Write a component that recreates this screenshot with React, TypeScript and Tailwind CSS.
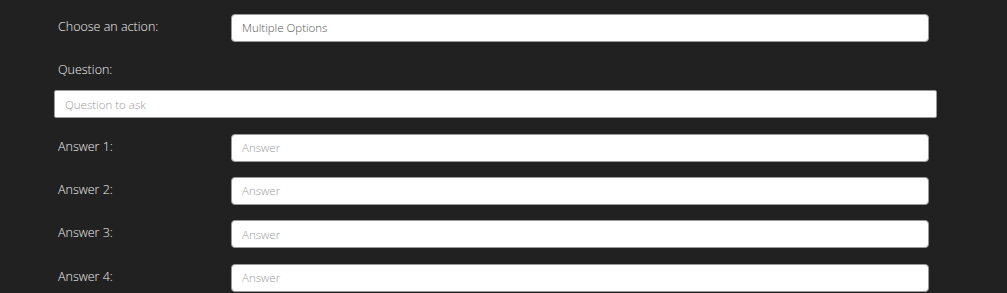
import React from 'react';

const answers = [1, 2, 3, 4];

const Row: React.FC<{ label: string; children: React.ReactNode }> = ({ label, children }) => (
  <div className="flex items-center h-[28px] pl-[4px]">
    <div className="w-[173px] shrink-0 text-[12.5px] font-light text-[#f0f0f0] -mt-[1px]">{label}</div>
    {children}
  </div>
);

const inputCls =
  'w-[698px] h-[28px] bg-white border border-[#9a9a9a] rounded-[4px] px-[10px] text-[11.5px] font-light text-[#555] placeholder:text-[#9b9b9b] outline-none';

export default function App() {
  return (
    <div
      className="w-full h-[293px] bg-[#212121] overflow-hidden pl-[54px] pt-[14px]"
      style={{ fontFamily: '"Open Sans", "Liberation Sans", sans-serif' }}
    >
      <div className="w-[883px]">
        <Row label="Choose an action:">
          <div className={inputCls + ' flex items-center'}>Multiple Options</div>
        </Row>
        <div className="mt-[18px] h-[20px] flex items-center pl-[4px] text-[12.5px] font-light text-[#f0f0f0]">Question:</div>
        <input
          className="block mt-[10px] w-[883px] h-[28px] bg-white border border-[#9a9a9a] rounded-[2px] px-[10px] text-[11.5px] font-light text-[#555] placeholder:text-[#9b9b9b] outline-none"
          placeholder="Question to ask"
        />
        <div className="mt-[15.5px] flex flex-col gap-[15.4px]">
          {answers.map((n) => (
            <Row key={n} label={`Answer ${n}:`}>
              <input className={inputCls} placeholder="Answer" />
            </Row>
          ))}
        </div>
      </div>
    </div>
  );
}
